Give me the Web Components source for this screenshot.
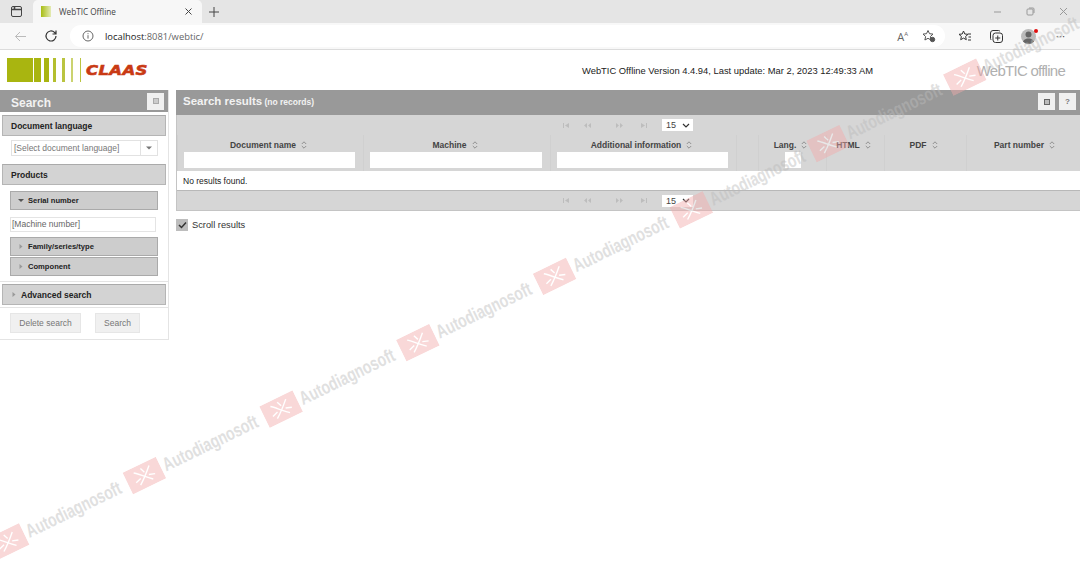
<!DOCTYPE html>
<html>
<head>
<meta charset="utf-8">
<title>WebTIC Offline</title>
<style>
  html, body { margin: 0; padding: 0; background: #fff; }
  body { width: 1080px; height: 571px; overflow: hidden; position: relative; font-family: "Liberation Sans", Arial, sans-serif; color: #333; }
  .main { display: flex; gap: 7px; align-items: flex-start; }
</style>
</head>
<body>
<browser-chrome></browser-chrome>
<page-header></page-header>
<div class="main">
  <search-panel></search-panel>
  <results-panel></results-panel>
</div>
<water-mark></water-mark>

<script>
/* small helper, every component is built the same way */
class Base extends HTMLElement {
  constructor(html) {
    super();
    this.attachShadow({mode: 'open'}).innerHTML = html;
  }
}

class BrowserChrome extends Base {
  constructor() {
    super(`
      <style>
        :host { display: block; height: 50px; font-family: "Open Sans", "Noto Sans", sans-serif; }
        svg { display: block; fill: none; stroke: #444; stroke-width: 1; }
        .tabs { height: 23px; background: #e5e5e5; display: flex; align-items: flex-end; }
        .winbtn { width: 33px; height: 23px; display: flex; align-items: center; justify-content: center; }
        .tab { width: 169px; height: 23px; box-sizing: border-box; background: #f7f7f7; border-radius: 5px 5px 0 0; display: flex; align-items: center; padding: 0 9px 0 8px; font-size: 8.2px; color: #444; }
        .fav { width: 10px; height: 11px; margin-right: 8px; background: linear-gradient(90deg, #a8bd14, #e4ebb4); }
        .title { flex: 1; }
        .plus { width: 24px; height: 23px; display: flex; align-items: center; justify-content: center; }
        .spacer { flex: 1; }
        .ctl { width: 33px; height: 23px; display: flex; align-items: center; justify-content: center; }
        .ctl svg { stroke: #999; }
        .bar { height: 27px; box-sizing: border-box; border-bottom: 1px solid #dcdcdc; background: #f8f8f8; display: flex; align-items: center; }
        .nav { width: 32px; height: 25px; display: flex; align-items: center; justify-content: center; }
        .nav.back { margin-left: 4px; }
        .nav.reload { margin-left: -1px; }
        .pill { margin-left: 3px; width: 875px; height: 22px; background: #fff; border-radius: 11px; display: flex; align-items: center; box-sizing: border-box; padding: 0 9px 0 12px; font-size: 9.4px; color: #666; }
        .pill b { font-weight: 400; color: #222; }
        .url { flex: 1; margin-left: 11px; }
        .aa { font-size: 11px; color: #666; margin-right: 14px; }
        .aa sup { font-size: 6px; line-height: 0; }
        .tools { flex: 1; display: flex; align-items: center; padding-left: 13px; gap: 17px; }
        .avatar { width: 15px; height: 15px; border-radius: 50%; background: #bbb; position: relative; overflow: hidden; }
        .wrap { position: relative; }
        .dot { position: absolute; right: -2px; top: 0; width: 4px; height: 4px; background: #e01010; border-radius: 50%; }
        .dots { font-size: 10px; color: #444; letter-spacing: .5px; margin-left: 3px; line-height: 10px; }
      </style>
      <div class="tabs">
        <div class="winbtn"><svg width="13" height="13" viewBox="0 0 13 13"><rect x="1.5" y="1.5" width="10" height="10" rx="1.5"/><path d="M1.5 4.5h10M4.5 1.5v3" stroke-width="1.6"/></svg></div>
        <div class="tab">
          <span class="fav"></span><span class="title">WebTIC Offline</span>
          <svg width="9" height="9" viewBox="0 0 9 9"><path d="M1.5 1.5l6 6M7.5 1.5l-6 6"/></svg>
        </div>
        <div class="plus"><svg width="12" height="12" viewBox="0 0 12 12"><path d="M6 1v10M1 6h10"/></svg></div>
        <div class="spacer"></div>
        <div class="ctl"><svg width="9" height="9" viewBox="0 0 9 9"><path d="M1 5h7"/></svg></div>
        <div class="ctl"><svg width="9" height="9" viewBox="0 0 9 9"><rect x="1" y="2" width="6" height="6" rx="1"/><path d="M3 1h4a1 1 0 0 1 1 1v4"/></svg></div>
        <div class="ctl"><svg width="9" height="9" viewBox="0 0 9 9"><path d="M1 1l7 7M8 1l-7 7"/></svg></div>
      </div>
      <div class="bar">
        <div class="nav back"><svg width="13" height="13" viewBox="0 0 13 13" style="stroke:#bbb"><path d="M12 6.5H1.5M6 2L1.5 6.5 6 11"/></svg></div>
        <div class="nav reload"><svg width="14" height="14" viewBox="0 0 14 14" style="stroke:#333;stroke-width:1.2"><path d="M12 7a5 5 0 1 1-1.5-3.6L12 5M12 1.5V5H8.5"/></svg></div>
        <div class="pill">
          <svg width="12" height="12" viewBox="0 0 12 12" style="stroke:#666"><circle cx="6" cy="6" r="5"/><path d="M6 5.2v3.4M6 3.2v1"/></svg>
          <span class="url"><b>localhost</b>:8081/webtic/</span>
          <span class="aa">A<sup>A</sup></span>
          <svg width="14" height="14" viewBox="0 0 14 14" style="stroke:#555"><path d="M6 1.5l1.5 3.2 3.5.4-2.6 2.4.7 3.5L6 9.3l-3.1 1.7.7-3.5L1 5.1l3.5-.4z"/><circle cx="10.5" cy="10.5" r="2.2" fill="#555"/></svg>
        </div>
        <div class="tools">
          <svg width="14" height="14" viewBox="0 0 14 14" style="stroke:#333"><path d="M5.5 2l1.3 3 3.2.3-2.4 2.2.7 3.2-2.8-1.6-2.8 1.6.7-3.2L1 5.3 4.2 5z"/><path d="M10 5h3M10.5 8H13M10 11h3"/></svg>
          <svg width="15" height="15" viewBox="0 0 15 15" style="stroke:#333"><rect x="4" y="4" width="9.5" height="9.5" rx="2.5"/><path d="M11 2.4A2 2 0 0 0 9.500 1.500H4A2.500 2.500 0 0 0 1.500 4v5.500A2 2 0 0 0 2.400 11M8.750 6.500v5M6.250 9h5"/></svg>
          <div class="wrap">
            <div class="avatar"><svg width="15" height="15" viewBox="0 0 15 15" style="stroke:none;fill:#666"><circle cx="7.500" cy="5.500" r="3"/><path d="M1.500 15c0-4 3-5.500 6-5.500s6 1.500 6 5.500z"/></svg></div>
            <span class="dot"></span>
          </div>
          <span class="dots">···</span>
        </div>
      </div>
    `);
  }
}

class PageHeader extends Base {
  constructor() {
    super(`
      <style>
        :host { display: flex; align-items: center; height: 40px; box-sizing: border-box; padding: 0 15px 0 7px; position: relative; }
        .bars { display: flex; height: 24px; align-items: stretch; }
        .bars i { display: block; background: #a9b510; }
        .claas { margin-left: 4px; font: italic 700 14.5px/1 "DejaVu Sans", sans-serif; color: #c93a14; letter-spacing: .3px; display: inline-block; transform: scaleX(1.14); transform-origin: 0 50%; -webkit-text-stroke: .6px #c93a14; }
        .ver { position: absolute; left: 582px; top: 15px; font-size: 9.4px; color: #222; white-space: nowrap; }
        .brand { margin-left: auto; font-size: 15px; color: #b0b0b0; letter-spacing: -.74px; }
      </style>
      <div class="bars">
        <i style="width:26px;margin-right:1px"></i><i style="width:7px;margin-right:3px"></i><i style="width:5px;margin-right:4px"></i><i style="width:3px;margin-right:6px;background:#b4bf2e"></i><i style="width:3px;margin-right:6px;opacity:.8"></i><i style="width:2px;margin-right:7px;opacity:.6"></i><i style="width:1px;margin-right:1px;opacity:.8"></i>
      </div>
      <span class="claas">CLAAS</span>
      <span class="ver">WebTIC Offline Version 4.4.94, Last update: Mar 2, 2023 12:49:33 AM</span>
      <span class="brand">WebTIC offline</span>
    `);
  }
}

class TitleBar extends Base {
  constructor() {
    super(`
      <style>
        :host { display: flex; align-items: center; background: #999; color: #f2f2f2; font-size: 11.5px; font-weight: 700; box-sizing: border-box; padding: 0 4px var(--hb, 2px) var(--pl, 7px); height: var(--h, 25px); }
        .t { flex: 1; padding-top: var(--tp, 0); padding-bottom: var(--tb, 1px); }
      </style>
      <span class="t"><slot></slot></span>
      <slot name="tools"></slot>
    `);
  }
}
class IconBtn extends Base {
  constructor() {
    super(`
      <style>
        :host { display: flex; align-items: center; justify-content: center; width: 17px; height: 17px; background: #f0f0f0; color: #777; font-size: 8px; font-weight: 700; margin-left: 4px; }
      </style>
      <slot></slot>
    `);
  }
}

class SectionHead extends Base {
  constructor() {
    super(`
      <style>
        :host { display: flex; align-items: center; box-sizing: border-box; height: 21px; margin: 0 2px; padding-left: 8px; background: #d3d3d3; border: 1px solid #b5b5b5; border-top-color: #aaa; font-size: 8.5px; font-weight: 700; color: #222; }
      </style>
      <slot name="icon"></slot><slot></slot>
    `);
  }
}
class SubHead extends Base {
  constructor() {
    super(`
      <style>
        :host { display: flex; align-items: center; box-sizing: border-box; height: 19px; margin: 0 10px; padding-left: 7px; background: #cdcdcd; border: 1px solid #aaa; font-size: 7.6px; font-weight: 700; color: #222; }
        ::slotted(svg) { margin-right: 4px; }
      </style>
      <slot name="icon"></slot><slot></slot>
    `);
  }
}

class SearchPanel extends Base {
  constructor() {
    const right = `<svg slot="icon" width="6" height="7" viewBox="0 0 6 7"><path d="M1.500 1l3 2.500-3 2.500z" fill="#999"/></svg>`;
    super(`
      <style>
        :host { display: block; width: 169px; height: 250px; box-sizing: border-box; border: 1px solid #e4e4e4; border-top: 0; border-left: 0; }
        title-bar { --h: 22px; --pl: 11px; --hb: 0px; --tp: 3px; --tb: 0px; font-size: 12px; margin-bottom: 3px; }
        section-head svg { margin-right: 4px; }
        .sel { margin: 4px 10px 0 11px; height: 16px; box-sizing: border-box; border: 1px solid #e2e2e2; display: flex; font-size: 8.5px; color: #777; align-items: center; padding-left: 2px; }
        .sel span { flex: 1; }
        .sel i { width: 16px; height: 14px; border-left: 1px solid #e2e2e2; display: flex; align-items: center; justify-content: center; }
        .inp { margin: 7px 12px 5px 10px; height: 15px; box-sizing: border-box; border: 1px solid #e4e4e4; font-size: 8.5px; color: #666; padding-left: 1px; line-height: 13px; }
        .rule { height: 1px; background: #e4e4e4; }
        .btns { display: flex; gap: 14px; padding: 5px 0 0 10px; }
        .btn { height: 20px; display: flex; align-items: center; justify-content: center; background: #f0f0f0; border: 1px solid #e6e6e6; box-sizing: border-box; font-size: 8.5px; color: #777; }
      </style>
      <title-bar>Search<icon-btn slot="tools"><svg width="6" height="6" viewBox="0 0 6 6"><rect x=".5" y=".5" width="5" height="5" fill="#ccc" stroke="#aaa"/></svg></icon-btn></title-bar>
      <section-head>Document language</section-head>
      <div class="sel"><span>[Select document language]</span><i><svg width="6" height="4" viewBox="0 0 6 4"><path d="M0 .5h6L3 3.500z" fill="#777"/></svg></i></div>
      <section-head style="margin-top:8px">Products</section-head>
      <sub-head style="margin-top:6px"><svg slot="icon" width="6" height="5" viewBox="0 0 6 5"><path d="M0 1h6L3 4z" fill="#555"/></svg>Serial number</sub-head>
      <div class="inp">[Machine number]</div>
      <sub-head>${right}Family/series/type</sub-head>
      <sub-head style="margin-top:1px">${right}Component</sub-head>
      <div class="rule" style="margin-top:5px"></div>
      <section-head style="margin-top:2px">${right}Advanced search</section-head>
      <div class="rule" style="margin-top:2px"></div>
      <div class="btns">
        <div class="btn" style="width:71px">Delete search</div>
        <div class="btn" style="width:45px">Search</div>
      </div>
    `);
  }
}

class PagerBar extends Base {
  constructor() {
    const g = (d, mr) => `<svg width="10" height="7" viewBox="0 0 10 7" style="margin-right:${mr}px"><path d="${d}" fill="#bdbdbd"/></svg>`;
    super(`
      <style>
        :host { display: flex; align-items: center; height: 20px; background: #d6d6d6; padding-left: 385px; box-sizing: border-box; }
        svg { display: block; flex: none; }
        .s { margin-left: 4px; width: 31px; height: 12px; background: #fff; display: flex; align-items: center; justify-content: space-between; box-sizing: border-box; padding: 0 3px 0 4px; font-size: 9px; color: #444; }
      </style>
      ${g('M1 1h1v5H1zM7 1v5L3 3.500z', 11)}${g('M1 3.500L4 1v5zM5 3.500L8 1v5z', 22)}${g('M1 1l3 2.500L1 6zM5 1l3 2.500L5 6z', 13)}${g('M3 1l4 2.500L3 6zM8 1h1v5H8z', 10)}
      <div class="s"><span>15</span><svg width="8" height="5" viewBox="0 0 8 5"><path d="M1 1l3 3 3-3" fill="none" stroke="#333" stroke-width="1.200"/></svg></div>
    `);
  }
}

class ColHead extends Base {
  constructor() {
    super(`
      <style>
        :host { display: flex; flex-direction: column; align-items: center; height: 36px; box-sizing: border-box; padding-top: 4px; border-left: 1px solid #d0d0d0; }
        .lab { display: flex; align-items: center; height: 12px; font-size: 8.5px; font-weight: 700; color: #444; gap: 5px; margin-right: 4px; }
        .f { display: none; height: 16px; background: #fff; }
        :host([filter]) .f { display: block; width: calc(100% - 14px); margin: 1px 2px 0 0; }
        :host([filter="small"]) .f { width: 16px; margin-right: 0; }
        svg { display: block; }
      </style>
      <div class="lab"><slot></slot><svg width="6" height="8" viewBox="0 0 6 8"><path d="M.8 3L3 .8 5.200 3M.8 5L3 7.200 5.200 5" fill="none" stroke="#888" stroke-width=".9"/></svg></div>
      <div class="f"></div>
    `);
  }
}

class ResultsPanel extends Base {
  constructor() {
    super(`
      <style>
        :host { display: block; width: 904px; }
        .box { border-left: 1px solid #c4c4c4; }
        .head { display: grid; grid-template-columns: 186px 187px 186px 22px 68px 58px 82px 1fr; background: #d6d6d6; }
        .head span.blank { border-left: 1px solid #d0d0d0; }
        .row { height: 20px; background: #fff; display: flex; align-items: center; padding-left: 6px; font-size: 8.5px; color: #222; border-bottom: 1px solid #b8b8b8; box-sizing: border-box; }
        .chk { display: flex; align-items: center; gap: 4px; margin-top: 8px; font-size: 9.3px; color: #333; }
        .chk i { width: 12px; height: 12px; background: #bdbdbd; display: flex; align-items: center; justify-content: center; }
        pager-bar.low { border-bottom: 1px solid #c4c4c4; }
        small { font-size: 8.5px; margin-left: -1px; }
      </style>
      <title-bar>Search results <small>(no records)</small>
        <icon-btn slot="tools"><svg width="6" height="6" viewBox="0 0 6 6"><rect x=".5" y=".5" width="5" height="5" fill="#bbb" stroke="#666"/></svg></icon-btn>
        <icon-btn slot="tools">?</icon-btn>
      </title-bar>
      <div class="box">
        <pager-bar></pager-bar>
        <div class="head">
          <col-head filter>Document name</col-head>
          <col-head filter>Machine</col-head>
          <col-head filter>Additional information</col-head>
          <span class="blank"></span>
          <col-head filter="small">Lang.</col-head>
          <col-head>HTML</col-head>
          <col-head>PDF</col-head>
          <col-head style="padding-left:6px">Part number</col-head>
        </div>
        <div class="row">No results found.</div>
        <pager-bar class="low"></pager-bar>
      </div>
      <div class="chk"><i><svg width="9" height="8" viewBox="0 0 9 8"><path d="M1 4l2.500 2.500L8 1.500" fill="none" stroke="#333" stroke-width="1.500"/></svg></i>Scroll results</div>
    `);
  }
}

class WaterMark extends Base {
  constructor() {
    const mark = `<div class="m">
        <svg width="37" height="24" viewBox="0 0 37 24"><rect width="37" height="24" fill="#f3abab"/><path d="M10 5c4 3 8 8 15 14M27 5C23 9 18 14 11 19M18 4l2 5M8 15l6-2M23 13l6 2" fill="none" stroke="#fff" stroke-width="1.400"/></svg>
        <span>Autodiagnosoft</span>
      </div>`;
    super(`
      <style>
        :host { position: absolute; left: 0; top: 0; width: 1080px; height: 571px; overflow: hidden; pointer-events: none; }
        .strip { position: absolute; left: -9px; top: 538px; display: flex; width: 1300px; transform: rotate(-25.900deg); transform-origin: 0 50%; opacity: .45; }
        .m { flex: 0 0 152px; min-width: 0; width: 152px; display: flex; align-items: center; height: 24px; }
        .m svg { flex: none; }
        .m span { display: inline-block; margin-left: 3px; font: 700 19px/24px "Liberation Sans", sans-serif; color: #bbb; transform: scaleX(.74); transform-origin: 0 50%; white-space: nowrap; }
      </style>
      <div class="strip">${mark.repeat(8)}</div>
    `);
  }
}

customElements.define('browser-chrome', BrowserChrome);
customElements.define('page-header', PageHeader);
customElements.define('title-bar', TitleBar);
customElements.define('icon-btn', IconBtn);
customElements.define('section-head', SectionHead);
customElements.define('sub-head', SubHead);
customElements.define('search-panel', SearchPanel);
customElements.define('pager-bar', PagerBar);
customElements.define('col-head', ColHead);
customElements.define('results-panel', ResultsPanel);
customElements.define('water-mark', WaterMark);
</script>
</body>
</html>
